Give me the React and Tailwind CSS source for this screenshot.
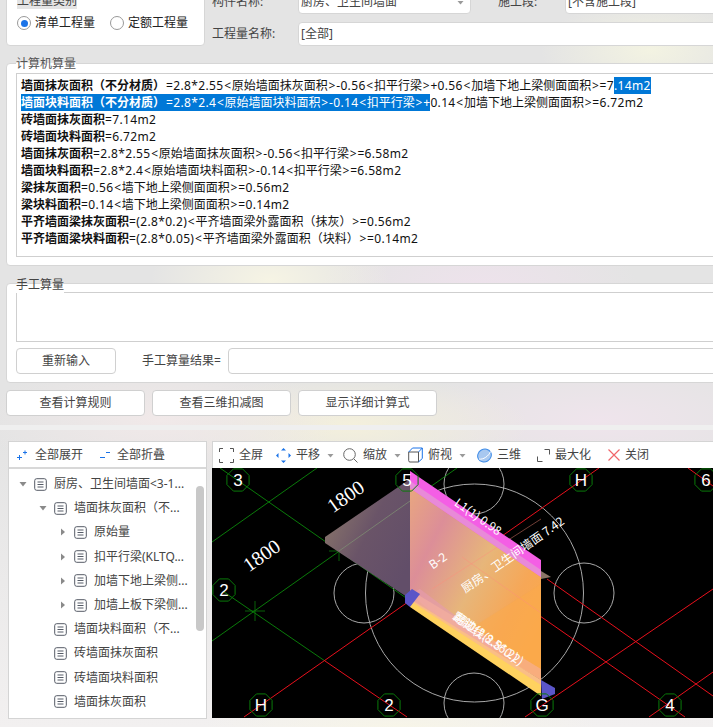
import React from 'react';

const calcLines = [
  ['砖墙面抹灰面积', '=7.14m2'],
  ['砖墙面块料面积', '=6.72m2'],
  ['墙面抹灰面积', '=2.8*2.55<原始墙面抹灰面积>-0.56<扣平行梁>=6.58m2'],
  ['墙面块料面积', '=2.8*2.4<原始墙面块料面积>-0.14<扣平行梁>=6.58m2'],
  ['梁抹灰面积', '=0.56<墙下地上梁侧面面积>=0.56m2'],
  ['梁块料面积', '=0.14<墙下地上梁侧面面积>=0.14m2'],
  ['平齐墙面梁抹灰面积', '=(2.8*0.2)<平齐墙面梁外露面积（抹灰）>=0.56m2'],
  ['平齐墙面梁块料面积', '=(2.8*0.05)<平齐墙面梁外露面积（块料）>=0.14m2'],
];

const treeRows = [
  { text: '厨房、卫生间墙面<3-1...', level: 0, arrow: 'down' },
  { text: '墙面抹灰面积（不...', level: 1, arrow: 'down' },
  { text: '原始量', level: 2, arrow: 'right' },
  { text: '扣平行梁(KLTQ...', level: 2, arrow: 'right' },
  { text: '加墙下地上梁侧...', level: 2, arrow: 'right' },
  { text: '加墙上板下梁侧...', level: 2, arrow: 'right' },
  { text: '墙面块料面积（不...', level: 1 },
  { text: '砖墙面抹灰面积', level: 1 },
  { text: '砖墙面块料面积', level: 1 },
  { text: '墙面抹灰面积', level: 1 },
  { text: '墙面块料面积', level: 1 },
];

const bubbles = [
  ['3', 238, 481], ['5', 407, 481], ['H', 581, 481], ['6', 706, 481],
  ['2', 224, 591], ['H', 261, 706], ['2', 389, 706], ['G', 542, 706], ['4', 670, 706],
];

const octagon = (cx, cy, r) => {
  const pts = [];
  for (let i = 0; i < 8; i++) {
    const a = Math.PI / 8 + (i * Math.PI) / 4;
    pts.push(`${cx + r * Math.cos(a)},${cy + r * Math.sin(a)}`);
  }
  return pts.join(' ');
};

// latin runs and the angle brackets sit a little wider in the original font
const Formula = ({ text }) =>
  text.split(/([<>]|[=+\-().*0-9m]+)/).filter(Boolean).map((part, i) => {
    if (part === '<' || part === '>') return <span key={i} className="mx-[0.75px]">{part}</span>;
    if (/^[=+\-().*0-9m]+$/.test(part)) return <span key={i} className="tracking-[0.35px]">{part}</span>;
    return <span key={i}>{part}</span>;
  });

const RowIcon = () => (
  <svg width="13" height="13" viewBox="0 0 13 13" className="shrink-0" fill="none" stroke="#555b66">
    <rect x="0.7" y="0.7" width="11.6" height="11.6" rx="2" />
    <path d="M3.5 4h6M3.5 6.5h6M3.5 9h6" />
  </svg>
);

const Arrow = ({ dir }) => {
  if (dir === 'down') {
    return <svg width="8" height="6" viewBox="0 0 8 6" className="shrink-0"><path d="M0.5 1h7L4 5.5z" fill="#8a8a8a" /></svg>;
  }
  if (dir === 'right') {
    return <svg width="6" height="8" viewBox="0 0 6 8" className="shrink-0 mx-[1px]"><path d="M1 0.5v7L5 4z" fill="#8a8a8a" /></svg>;
  }
  return <span className="w-[8px] shrink-0" />;
};

const Caret = () => (
  <svg width="7" height="5" viewBox="0 0 7 5" className="shrink-0"><path d="M0.5 1h6L3.5 4.5z" fill="#9a9a9a" /></svg>
);

const ToolItem = ({ icon, label, caret, className }) => (
  <div className={`flex items-center ${className}`}>
    {icon}
    <span className="ml-[5px]">{label}</span>
    {caret && <span className="ml-[7px]"><Caret /></span>}
  </div>
);

const CadDrawing = () => (
  <svg viewBox="212 469 501 250" width="501" height="250" className="block bg-black">
    <defs>
      <linearGradient id="side" x1="0" y1="0" x2="1" y2="0.7">
        <stop offset="0" stopColor="#93806b" />
        <stop offset="0.55" stopColor="#6a5468" />
        <stop offset="1" stopColor="#624e69" />
      </linearGradient>
      <linearGradient id="front" x1="0" y1="0" x2="1" y2="0.75">
        <stop offset="0" stopColor="#e9a77f" />
        <stop offset="0.25" stopColor="#dc8e98" />
        <stop offset="0.55" stopColor="#e7b67a" />
        <stop offset="0.8" stopColor="#f6a757" />
        <stop offset="1" stopColor="#fba94a" />
      </linearGradient>
    </defs>
    <g fill="none" stroke="#a8a8a8" strokeWidth="1">
      <circle cx="474.5" cy="594" r="109" />
      <circle cx="474" cy="485" r="30" />
      <circle cx="364" cy="594" r="30" />
      <circle cx="584" cy="594" r="30" />
      <circle cx="474" cy="704" r="30" />
    </g>
    <g fill="none" stroke="#0a7a0a" strokeWidth="1">
      <path d="M220 469L379 580L409 601" />
      <path d="M212 543L317 469" />
      <path d="M457 469L212 642" />
      <path d="M224 593L325 662" />
      <path d="M339 542V562M329 552H349" strokeWidth="0.8" />
      <path d="M255 602V622M245 612H265" strokeWidth="0.8" />
    </g>
    <g fill="none" stroke="#e8101c" strokeWidth="1">
      <path d="M244 718L599 469" />
      <path d="M325 662L407 718" />
      <path d="M547 580L713 697" />
      <path d="M540 617L685 718" />
      <path d="M713 590L525 718" />
      <path d="M713 673L649 718" />
      <path d="M688 469L713 487" />
    </g>
    <polygon points="325,538 410,480 410,600 325,544" fill="url(#side)" />
    <path d="M339 552L410 502" stroke="#7d8c72" strokeWidth="0.8" fill="none" />
    <polygon points="541,572 551,578 541,580" fill="#8a7565" />
    <polygon points="410,486 541,577 541,681 410,604" fill="url(#front)" />
    <polygon points="470,630 541,585 541,681" fill="#fba94a" opacity="0.5" />
    <path d="M432 590L541 520M462 558L541 614" stroke="#ff8f7c" strokeWidth="0.8" opacity="0.55" fill="none" />
    <polygon points="410,472 541,561 541,578 410,489" fill="#f45ee5" />
    <polygon points="410,482 541,571 541,578 410,489" fill="#e88ad8" />
    <polygon points="410,595 420,590 500,650 480,652" fill="#e69bb0" opacity="0.6" />
    <polygon points="410,600 541,681 541,697 410,608" fill="#ffd25f" />
    <polygon points="415,594 541,670 541,686 412,603" fill="#f7b1a0" opacity="0.6" />
    <polygon points="405,596 412,590 420,595 410,608 405,604" fill="#5b55c8" />
    <polygon points="541,681 555,689 555,695 542,700" fill="#5b55c8" />
    <g fill="none" stroke="#0a7a0a" strokeWidth="1">
      {bubbles.map(([t, x, y], i) => <polygon key={i} points={octagon(x, y, 12)} />)}
    </g>
    <g fill="#fff" fontFamily="'Liberation Sans','Noto Sans CJK SC',sans-serif" textAnchor="middle">
      {bubbles.map(([t, x, y], i) => <text key={i} x={x} y={y + 6} fontSize="17">{t}</text>)}
    </g>
    <g fill="#fff" fontFamily="'Liberation Serif','Noto Sans CJK SC',serif" textAnchor="middle">
      <text x="346" y="504" fontSize="20" transform="rotate(-35 346 498)">1800</text>
      <text x="262" y="563" fontSize="20" transform="rotate(-35 262 557)">1800</text>
    </g>
    <g fill="#fff" fontFamily="'Noto Sans CJK SC',sans-serif" textAnchor="middle">
      <text x="478" y="522" fontSize="12" transform="rotate(35 478 518)">L1(1) 0.98</text>
      <text x="513" y="560" fontSize="12" transform="rotate(-35 513 556)">厨房、卫生间墙面 7.42</text>
      <text x="438" y="566" fontSize="12" transform="rotate(-35 438 562)">B-2</text>
      <text x="488" y="644" fontSize="12" transform="rotate(35 488 640)">踢脚线(2.8*0.2)</text>
      <text x="486" y="642" fontSize="12" transform="rotate(35 486 638)">翻边(2.8.56.2)</text>
    </g>
  </svg>
);

const App = () => {
  return (
    <div className="relative w-[713px] h-[727px] overflow-hidden text-[12px] text-[#333] font-['Noto_Sans','Noto_Sans_CJK_SC',sans-serif] bg-[#e6e6e6] bg-[radial-gradient(ellipse_110px_50px_at_650px_50px,#f3f3e2,transparent),radial-gradient(ellipse_120px_60px_at_270px_280px,#f6f4e4,transparent),radial-gradient(ellipse_160px_70px_at_480px_290px,#eee2ec,transparent),radial-gradient(ellipse_180px_60px_at_160px_420px,#f1e9e9,transparent),radial-gradient(ellipse_180px_50px_at_350px_425px,#f4f0dc,transparent),radial-gradient(ellipse_200px_60px_at_600px_420px,#efe4ec,transparent),radial-gradient(ellipse_200px_30px_at_400px_727px,#f7f5e8,transparent),linear-gradient(180deg,#e4e4e4_0%,#e4e4e4_60%,#f2f0f0_100%)]">
      {/* top form, cut off by the window */}
      <div className="flex -mt-[10px] pl-[6px] w-[760px] h-[56px]">
        <div className="w-[199px] h-[56px] bg-white rounded border border-[#d6d6d6] relative shrink-0">
          <span className="absolute left-[10px] top-[1px] bg-[#e4e4e4] leading-[17px] text-[#444]">工程量类别</span>
          <div className="flex items-center pl-[10px] mt-[23px]">
            <span className="w-[14px] h-[14px] rounded-full border border-[#999] flex items-center justify-center">
              <span className="w-[7px] h-[7px] rounded-full bg-[#1a73e8]" />
            </span>
            <span className="ml-[4px] text-[#222]">清单工程量</span>
            <span className="w-[14px] h-[14px] rounded-full border border-[#999] ml-[15px]" />
            <span className="ml-[4px] text-[#222]">定额工程量</span>
          </div>
        </div>
        <div className="ml-[7px] flex-1 flex flex-col gap-[8px]">
          <div className="flex items-center h-[24px]">
            <span className="w-[86px] text-[#444]">构件名称:</span>
            <div className="w-[173px] h-[24px] bg-white rounded border border-[#d6d6d6] flex items-center justify-between pl-[2px] pr-[6px] text-[#444]">
              <span>厨房、卫生间墙面</span>
              <Caret />
            </div>
            <span className="ml-[27px] w-[67px] text-[#444]">施工段:</span>
            <div className="flex-1 h-[24px] bg-white rounded border border-[#d6d6d6] flex items-center pl-[2px] text-[#444]">[不含施工段]</div>
          </div>
          <div className="flex items-center h-[24px]">
            <span className="w-[86px] text-[#444]">工程量名称:</span>
            <div className="flex-1 h-[24px] bg-white rounded border border-[#d6d6d6] flex items-center pl-[2px] text-[#444]">[全部]</div>
          </div>
        </div>
      </div>

      {/* computed quantities */}
      <div className="relative mt-[17px] ml-[6px] w-[730px] h-[203px] bg-white rounded border border-[#d6d6d6] pt-[9px] pl-[9px]">
        <span className="absolute left-[9px] -top-[9px] leading-[17px] text-[#555] bg-[linear-gradient(180deg,#e4e4e4_50%,#ffffff_50%)]">计算机算量</span>
        <div className="w-[715px] h-[184px] border border-[#cfcfcf] pt-[3px] pl-[4px] leading-[17px] text-[#111] whitespace-nowrap">
          <div>
            <b>墙面抹灰面积（不分材质）</b><span className="ml-[1px]"><Formula text="=2.8*2.55<原始墙面抹灰面积>-0.56<扣平行梁>+0.56<加墙下地上梁侧面面积>=7" /></span><span className="bg-[#0078d7] text-white"><Formula text=".14m2" /></span>
          </div>
          <div>
            <span className="bg-[#0078d7] text-white"><b>墙面块料面积（不分材质）</b><span className="ml-[1px]"><Formula text="=2.8*2.4<原始墙面块料面积>-0.14<扣平行梁>+" /></span></span><Formula text="0.14<加墙下地上梁侧面面积>=6.72m2" />
          </div>
          {calcLines.map(([name, rest]) => (
            <div key={name}><b>{name}</b><Formula text={rest} /></div>
          ))}
        </div>
      </div>

      {/* manual quantities */}
      <div className="relative mt-[17px] ml-[6px] w-[730px] h-[100px] bg-white rounded border border-[#d6d6d6] pt-[8px] pl-[9px]">
        <span className="absolute left-[9px] -top-[8px] leading-[17px] text-[#444] bg-[linear-gradient(180deg,transparent_50%,#ffffff_50%)]">手工算量</span>
        <div className="w-[715px] h-[50px] border border-[#cfcfcf]" />
        <div className="flex items-center mt-[6px]">
          <button className="w-[100px] h-[26px] bg-white rounded border border-[#d0d0d0] text-[#444]">重新输入</button>
          <span className="ml-[26px] text-[#444]">手工算量结果=</span>
          <div className="ml-[7px] flex-1 h-[26px] rounded border border-[#d0d0d0] bg-white" />
        </div>
      </div>

      <div className="flex gap-[7px] mt-[7px] ml-[6px]">
        <button className="w-[139px] h-[26px] bg-white rounded border border-[#d0d0d0] text-[#444]">查看计算规则</button>
        <button className="w-[139px] h-[26px] bg-white rounded border border-[#d0d0d0] text-[#444]">查看三维扣减图</button>
        <button className="w-[139px] h-[26px] bg-white rounded border border-[#d0d0d0] text-[#444]">显示详细计算式</button>
      </div>

      <div className="h-[5px] mt-[9px] bg-[#efefef]" />

      {/* tree + 3d view */}
      <div className="flex mt-[11px] ml-[8px] h-[278px]">
        <div className="w-[199px] shrink-0 bg-white border border-[#d4d4d4] flex flex-col overflow-hidden">
          <div className="h-[27px] shrink-0 flex items-center border-b-2 border-[#d8d8d8] pl-[8px] text-[#444]">
            <svg width="10" height="10" viewBox="0 0 10 10" stroke="#1a73e8" fill="none" className="shrink-0">
              <path d="M0 7.5h5M2.5 5v5M6 2.5h4M8 0.5v4" />
            </svg>
            <span className="ml-[8px]">全部展开</span>
            <svg width="10" height="10" viewBox="0 0 10 10" stroke="#1a73e8" fill="none" className="ml-[17px] shrink-0">
              <path d="M0 7.5h5M6 2.5h4" />
            </svg>
            <span className="ml-[7px]">全部折叠</span>
          </div>
          <div className="relative flex-1 pt-[3px]">
            {treeRows.map((row) => (
              <div
                key={row.text}
                className={
                  'flex items-center h-[24.2px] whitespace-nowrap text-[#444] ' +
                  (row.level === 0 ? 'pl-[10px]' : row.level === 1 ? 'pl-[30px]' : 'pl-[50px]')
                }
              >
                <Arrow dir={row.arrow} />
                <span className="ml-[7px]"><RowIcon /></span>
                <span className="ml-[7px]">{row.text}</span>
              </div>
            ))}
            <div className="absolute left-[187px] top-[17px] w-[8px] h-[145px] rounded bg-[#c8c8c8]" />
          </div>
        </div>
        <div className="ml-[5px] flex-1 flex flex-col min-w-0">
          <div className="h-[27px] shrink-0 bg-white border-t border-l border-[#d4d4d4] flex items-center pl-[6px] text-[#444] whitespace-nowrap">
            <ToolItem
              label="全屏"
              className="w-[57px]"
              icon={
                <svg width="15" height="15" viewBox="0 0 15 15" fill="none" stroke="#555">
                  <path d="M0.5 4V0.5H4M11 0.5H14.5V4M14.5 11V14.5H11M4 14.5H0.5V11" />
                </svg>
              }
            />
            <ToolItem
              label="平移"
              caret
              className="w-[67px]"
              icon={
                <svg width="15" height="15" viewBox="0 0 15 15" fill="#1a73e8">
                  <path d="M7.5 0L10 2.5H5zM7.5 15L5 12.5H10zM0 7.5L2.5 5V10zM15 7.5L12.5 10V5z" />
                </svg>
              }
            />
            <ToolItem
              label="缩放"
              caret
              className="w-[65px]"
              icon={
                <svg width="15" height="15" viewBox="0 0 15 15" fill="none" stroke="#666">
                  <circle cx="6.5" cy="6.5" r="5.8" />
                  <path d="M10.8 10.8L14.5 14.5" />
                </svg>
              }
            />
            <ToolItem
              label="俯视"
              caret
              className="w-[69px]"
              icon={
                <svg width="15" height="16" viewBox="0 0 15 16" fill="none" stroke="#555">
                  <path d="M0.7 5H10.5V15H2a1.3 1.3 0 0 1-1.3-1.3z" />
                  <path d="M0.7 5L4.5 1H14.3L10.5 5M14.3 1V11.5L10.5 15" stroke="#1a73e8" />
                </svg>
              }
            />
            <ToolItem
              label="三维"
              className="w-[60px]"
              icon={
                <svg width="15" height="15" viewBox="0 0 15 15">
                  <ellipse cx="7.5" cy="7.5" rx="7" ry="6.3" fill="#a8c8f0" stroke="#3d8be8" transform="rotate(-30 7.5 7.5)" />
                  <path d="M2 11C6 12 12 8 13.5 3.5" stroke="#fff" fill="none" />
                </svg>
              }
            />
            <ToolItem
              label="最大化"
              className="w-[71px]"
              icon={
                <svg width="13" height="13" viewBox="0 0 13 13" fill="none" stroke="#555">
                  <path d="M0.5 7.5V12.5H5.5M7.5 0.5H12.5V5.5" />
                </svg>
              }
            />
            <ToolItem
              label="关闭"
              icon={
                <svg width="12" height="12" viewBox="0 0 12 12" fill="none" stroke="#f0666a" strokeWidth="1.2">
                  <path d="M0.5 0.5L11.5 11.5M11.5 0.5L0.5 11.5" />
                </svg>
              }
            />
          </div>
          <CadDrawing />
        </div>
      </div>
    </div>
  );
};

export default App;
